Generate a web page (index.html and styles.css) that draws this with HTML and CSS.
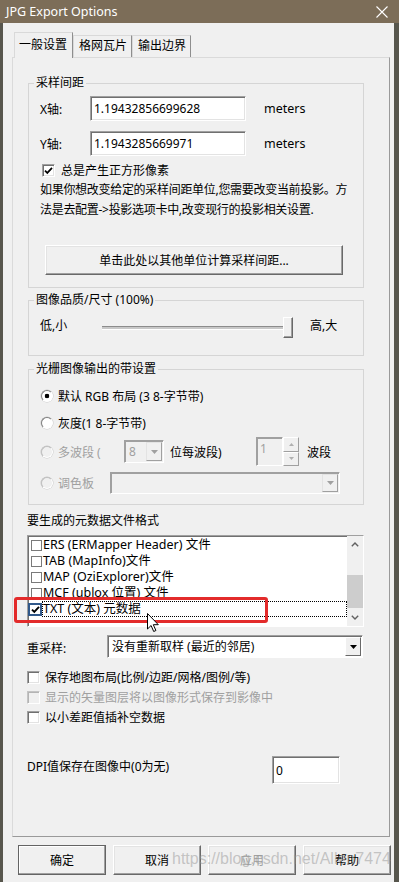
FILE: index.html
```html
<!DOCTYPE html>
<html lang="zh-CN">
<head>
    <meta charset="UTF-8">
    <meta name="viewport" content="width=device-width, initial-scale=1.0">
    <title>JPG Export Options</title>
    <link rel="stylesheet" href="styles.css">
</head>
<body>
    <div class="titlebar">
        <span class="title">JPG Export Options</span>
        <svg class="close" width="12" height="12" viewBox="0 0 12 12"><path d="M0.5 0.5L11.5 11.5M11.5 0.5L0.5 11.5" stroke="#fff" stroke-width="1.1"/></svg>
    </div>

    <div class="window">
        <div class="tabs">
            <div class="tab active">一般设置</div>
            <div class="tab">格网瓦片</div>
            <div class="tab">输出边界</div>
        </div>

        <div class="panel">
            <!-- 采样间距 -->
            <fieldset class="group spacing">
                <legend>采样间距</legend>
                <div class="row axis-row">
                    <span class="axis-label">X轴:</span>
                    <input class="field num" type="text" value="1.19432856699628">
                    <span class="unit">meters</span>
                </div>
                <div class="row axis-row second">
                    <span class="axis-label">Y轴:</span>
                    <input class="field num" type="text" value="1.1943285669971">
                    <span class="unit">meters</span>
                </div>
                <div class="row check-row square">
                    <span class="check"><svg viewBox="0 0 9 9"><path d="M1 4.6l2.3 2.3L8 1.8" stroke="#000" stroke-width="1.7" fill="none"/></svg></span>
                    <span>总是产生正方形像素</span>
                </div>
                <p class="note">如果你想改变给定的采样间距单位,您需要改变当前投影。方<br>法是去配置->投影选项卡中,改变现行的投影相关设置.</p>
                <button class="btn calc">单击此处以其他单位计算采样间距...</button>
            </fieldset>

            <!-- 图像品质 -->
            <fieldset class="group quality">
                <legend>图像品质/尺寸 (100%)</legend>
                <div class="row slider-row">
                    <span class="lo">低,小</span>
                    <div class="slider">
                        <div class="track"></div>
                        <div class="thumb"></div>
                    </div>
                    <span class="hi">高,大</span>
                </div>
            </fieldset>

            <!-- 带设置 -->
            <fieldset class="group bands">
                <legend>光栅图像输出的带设置</legend>
                <div class="row radio-row first">
                    <span class="radio on"></span>
                    <span>默认 RGB 布局 (3 8-字节带)</span>
                </div>
                <div class="row radio-row gray">
                    <span class="radio"></span>
                    <span>灰度(1 8-字节带)</span>
                </div>
                <div class="row radio-row multi">
                    <span class="radio off"></span>
                    <span class="dis multi-label">多波段 (</span>
                    <div class="combo disabled bits">
                        <span class="val">8</span>
                        <span class="drop"><svg width="7" height="4" viewBox="0 0 7 4"><path d="M0 0h7L3.5 4z" fill="#a0a0a0"/></svg></span>
                    </div>
                    <span class="per-band">位每波段)</span>
                    <div class="spin">
                        <span class="spin-val">1</span>
                        <span class="spin-btns">
                            <span class="spin-btn"><svg width="5" height="3" viewBox="0 0 5 3"><path d="M0 3h5L2.5 0z" fill="#b0b0b0"/></svg></span>
                            <span class="spin-btn"><svg width="5" height="3" viewBox="0 0 5 3"><path d="M0 0h5L2.5 3z" fill="#b0b0b0"/></svg></span>
                        </span>
                    </div>
                    <span class="band-word">波段</span>
                </div>
                <div class="row radio-row palette">
                    <span class="radio off"></span>
                    <span class="dis palette-label">调色板</span>
                    <div class="combo disabled pal">
                        <span class="val"></span>
                        <span class="drop"><svg width="7" height="4" viewBox="0 0 7 4"><path d="M0 0h7L3.5 4z" fill="#a0a0a0"/></svg></span>
                    </div>
                </div>
            </fieldset>

            <div class="meta-label">要生成的元数据文件格式</div>
            <div class="listbox">
                <div class="items">
                    <div class="item"><span class="lcheck"></span><span class="itext">ERS (ERMapper Header) 文件</span></div>
                    <div class="item"><span class="lcheck"></span><span class="itext">TAB (MapInfo)文件</span></div>
                    <div class="item"><span class="lcheck"></span><span class="itext">MAP (OziExplorer)文件</span></div>
                    <div class="item"><span class="lcheck"></span><span class="itext">MCF (ublox 位置) 文件</span></div>
                    <div class="item"><span class="lcheck focus"><svg viewBox="0 0 9 9"><path d="M1 4.6l2.3 2.3L8 1.8" stroke="#000" stroke-width="1.9" fill="none"/></svg></span><span class="itext focused">TXT (文本) 元数据</span></div>
                </div>
                <div class="scrollbar">
                    <span class="arrow"><svg width="8" height="5" viewBox="0 0 8 5"><path d="M0.8 4.2L4 1l3.2 3.2" stroke="#606060" stroke-width="1.4" fill="none"/></svg></span>
                    <span class="sb-thumb"></span>
                    <span class="arrow down"><svg width="8" height="5" viewBox="0 0 8 5"><path d="M0.8 0.8L4 4l3.2-3.2" stroke="#606060" stroke-width="1.4" fill="none"/></svg></span>
                </div>
            </div>

            <div class="row resample-row">
                <span class="resample-label">重采样:</span>
                <div class="combo resample">
                    <span class="val">没有重新取样 (最近的邻居)</span>
                    <span class="drop raised"><svg width="7" height="4" viewBox="0 0 7 4"><path d="M0 0h7L3.5 4z" fill="#000"/></svg></span>
                </div>
            </div>

            <div class="options">
                <div class="row opt"><span class="check"></span><span>保存地图布局(比例/边距/网格/图例/等)</span></div>
                <div class="row opt"><span class="check off"></span><span class="dis">显示的矢量图层将以图像形式保存到影像中</span></div>
                <div class="row opt"><span class="check"></span><span>以小差距值插补空数据</span></div>
            </div>

            <div class="row dpi-row">
                <span class="dpi-label">DPI值保存在图像中(0为无)</span>
                <input class="field dpi" type="text" value="0">
            </div>

            <div class="highlight"></div>
            <svg class="cursor" width="12" height="19" viewBox="0 0 12 19"><path d="M0.5 0.5v15.5l3.6-3.5 2.6 6 2.2-1-2.6-5.8h5z" fill="#fff" stroke="#000" stroke-width="1"/></svg>
        </div>

        <div class="buttons">
            <button class="btn default">确定</button>
            <button class="btn">取消</button>
            <button class="btn" disabled>应用</button>
            <button class="btn">帮助</button>
        </div>
    </div>

    <div class="watermark">https://blog.csdn.net/Allen7474</div>
</body>
</html>
```

FILE: styles.css
```css
* {
    box-sizing: border-box;
}
body {
    margin: 0;
    height: 882px;
    overflow: hidden;
    position: relative;
    background-color: #57564d;
    font-family: 'Noto Sans', 'Noto Sans CJK SC', sans-serif;
    font-size: 12px;
    color: #000;
}
.titlebar {
    height: 23px;
    background-color: #7c6d58;
    display: flex;
    align-items: center;
    justify-content: space-between;
    padding: 0 11px 0 6px;
    color: #fff;
}
.title {
    font-size: 12.5px;
}
.window {
    margin-left: 3px;
    width: 391px;
    height: 859px;
    background-color: #f0f0f0;
}
.row {
    display: flex;
    align-items: center;
}
.dis {
    color: #a0a0a0;
}

/* tabs */
.tabs {
    display: flex;
    align-items: flex-end;
    height: 34px;
    padding-left: 11px;
}
.tab {
    width: 59px;
    height: 22px;
    line-height: 20px;
    padding-left: 5px;
    border: 1px solid #d9d9d9;
    border-right-color: #8e8e8e;
    border-bottom: none;
    background-color: #f0f0f0;
}
.tab.active {
    height: 26px;
    line-height: 24px;
    padding-left: 4px;
    margin-bottom: -1px;
    position: relative;
    z-index: 1;
}
.tab + .tab {
    margin-left: 0;
}

/* panel */
.panel {
    position: relative;
    margin-left: 9px;
    width: 378px;
    height: 780px;
    padding-left: 14px;
    border: 1px solid #dadada;
    border-right-color: #9a9a9a;
    border-bottom-color: #9a9a9a;
}
.group {
    margin: 0 0 0 1px;
    padding: 0 11px;
    width: 336px;
    min-width: 0;
    border: 1px solid #d5d5d5;
}
.group legend {
    padding: 0 2px;
    margin-left: -6px;
    line-height: 16px;
}
.spacing {
    margin-top: 17px;
    padding-top: 5px;
    padding-bottom: 12px;
}
.axis-row {
    height: 25px;
}
.axis-row.second {
    margin-top: 10px;
}
.axis-label {
    width: 50px;
}
.field {
    height: 25px;
    padding: 0 3px;
    border: 1px solid;
    border-color: #a0a0a0 #fff #fff #a0a0a0;
    box-shadow: inset 1px 1px 0 #707070, inset -1px -1px 0 #e3e3e3;
    background-color: #fff;
    font-family: inherit;
    font-size: 12px;
    color: #000;
    outline: none;
}
.num {
    width: 156px;
}
.unit {
    margin-left: 18px;
    font-size: 12.5px;
}
.check-row {
    height: 16px;
}
.square {
    margin-top: 6px;
    margin-left: 2px;
}
.check {
    width: 13px;
    height: 13px;
    margin-right: 6px;
    display: flex;
    align-items: center;
    justify-content: center;
    background-color: #fff;
    border: 1px solid;
    border-color: #a0a0a0 #fff #fff #a0a0a0;
    box-shadow: inset 1px 1px 0 #707070, inset -1px -1px 0 #e3e3e3;
}
.check svg {
    width: 9px;
    height: 9px;
}
.check.off {
    background-color: #f0f0f0;
    border-color: #c4c4c4 #fff #fff #c4c4c4;
    box-shadow: inset 1px 1px 0 #b4b4b4;
}
.note {
    margin: 2px 0 0 0;
    line-height: 20px;
    white-space: nowrap;
    letter-spacing: -0.3px;
}
.btn {
    height: 30px;
    background-color: #f0f0f0;
    border: 1px solid;
    border-color: #fff #696969 #696969 #fff;
    box-shadow: inset -1px -1px 0 #a0a0a0, inset 1px 1px 0 #e3e3e3;
    font-family: inherit;
    font-size: 12px;
    color: #000;
    padding: 0;
}
.btn:disabled {
    color: #a0a0a0;
}
.calc {
    display: block;
    width: 298px;
    margin: 25px 0 0 5px;
}

/* quality slider */
.quality {
    margin-top: 4px;
    padding-top: 7px;
    padding-bottom: 20px;
}
.slider-row {
    height: 20px;
}
.lo {
    width: 62px;
}
.slider {
    display: flex;
    align-items: center;
    width: 191px;
}
.track {
    flex: 1;
    height: 4px;
    margin-top: 5px;
    border-top: 1px solid #8c8c8c;
    border-bottom: 1px solid #fff;
    background-color: #c8c8c8;
}
.thumb {
    width: 10px;
    height: 21px;
    margin-left: -7px;
    margin-top: 4px;
    background-color: #f0f0f0;
    border: 1px solid;
    border-color: #fff #696969 #696969 #fff;
    box-shadow: inset -1px -1px 0 #a0a0a0;
}
.hi {
    margin-left: 17px;
}

/* bands */
.bands {
    margin-top: 5px;
    padding-top: 9px;
    padding-bottom: 10px;
}
.radio-row {
    height: 20px;
}
.radio-row.gray {
    margin-top: 7px;
}
.radio-row.multi {
    height: 29px;
    margin-top: 4px;
}
.radio-row.palette {
    height: 22px;
    margin-top: 6px;
}
.radio {
    width: 12px;
    height: 12px;
    margin: 0 5px 0 1px;
    border-radius: 50%;
    border: 1px solid;
    border-color: #808080 #fff #fff #808080;
    background-color: #fff;
    box-shadow: 0 0 0 0.5px #c8c8c8;
}
.radio.on {
    background: radial-gradient(circle, #000 0 2px, #fff 2.6px);
}
.radio.off {
    background-color: #f0f0f0;
    border-color: #c0c0c0 #fff #fff #c0c0c0;
}
.multi-label {
    width: 66px;
}
.combo {
    display: flex;
    height: 23px;
    background-color: #fff;
    border: 1px solid;
    border-color: #a0a0a0 #fff #fff #a0a0a0;
    box-shadow: inset 1px 1px 0 #707070;
    padding: 1px;
}
.combo .val {
    flex: 1;
    padding-left: 3px;
    line-height: 19px;
    white-space: nowrap;
}
.drop {
    width: 16px;
    display: flex;
    align-items: center;
    justify-content: center;
    background-color: #f0f0f0;
    border: 1px solid;
    border-color: #e3e3e3 #a0a0a0 #a0a0a0 #e3e3e3;
}
.drop.raised {
    border-color: #fff #696969 #696969 #fff;
}
.combo.disabled {
    background-color: #f0f0f0;
    color: #a0a0a0;
    box-shadow: inset 1px 1px 0 #a0a0a0;
}
.bits {
    width: 40px;
}
.per-band {
    margin-left: 6px;
    width: 86px;
}
.spin {
    display: flex;
    width: 43px;
    height: 29px;
}
.spin-val {
    width: 27px;
    padding-left: 3px;
    line-height: 22px;
    color: #a0a0a0;
    border: 1px solid;
    border-color: #a0a0a0 #fff #fff #a0a0a0;
    box-shadow: inset 1px 1px 0 #a0a0a0;
}
.spin-btns {
    flex: 1;
    display: flex;
    flex-direction: column;
}
.spin-btn {
    flex: 1;
    display: flex;
    align-items: center;
    justify-content: center;
    border: 1px solid;
    border-color: #fff #a0a0a0 #a0a0a0 #fff;
}
.band-word {
    margin-left: 8px;
}
.palette-label {
    width: 52px;
}
.pal {
    width: 230px;
    height: 22px;
}

/* metadata list */
.meta-label {
    margin-top: 8px;
    line-height: 16px;
}
.listbox {
    display: flex;
    margin-top: 6px;
    width: 337px;
    height: 92px;
    background-color: #fff;
    border: 1px solid;
    border-color: #a0a0a0 #fff #fff #a0a0a0;
    box-shadow: inset 1px 1px 0 #707070;
}
.items {
    flex: 1;
    padding: 1px 0 0 3px;
}
.item {
    display: flex;
    align-items: center;
    height: 16px;
    font-size: 12.5px;
}
.lcheck {
    width: 11px;
    height: 11px;
    margin-right: 1px;
    border: 1px solid #7a7a7a;
    background-color: #fff;
    display: flex;
    align-items: center;
    justify-content: center;
}
.lcheck.focus {
    width: 14px;
    height: 13px;
    margin-left: -3px;
    border: 2px solid #30588a;
}
.lcheck svg {
    width: 9px;
    height: 9px;
}
.itext {
    line-height: 14px;
    white-space: nowrap;
}
.itext.focused {
    flex: 1;
    margin-right: 1px;
    outline: 1px dotted #000;
}
.scrollbar {
    width: 16px;
    display: flex;
    flex-direction: column;
    background-color: #f0f0f0;
}
.arrow {
    height: 18px;
    display: flex;
    align-items: center;
    justify-content: center;
}
.sb-thumb {
    margin-top: 21px;
    height: 34px;
    background-color: #cdcdcd;
}
.arrow.down {
    margin-top: auto;
}

/* resample + options */
.resample-row {
    margin-top: 8px;
}
.resample-label {
    width: 80px;
    padding-top: 2px;
}
.resample {
    width: 256px;
    height: 23px;
}
.options {
    margin-top: 9px;
}
.opt {
    height: 20px;
}
.opt .check {
    margin-right: 5px;
}
.dpi-row {
    margin-top: 29px;
    align-items: flex-start;
}
.dpi-label {
    width: 245px;
    line-height: 22px;
}
.dpi {
    width: 68px;
    height: 28px;
}

/* overlays */
.highlight {
    position: absolute;
    left: 1px;
    top: 539px;
    width: 254px;
    height: 26px;
    border: 3px solid #e32b2b;
    border-radius: 3px;
}
.cursor {
    position: absolute;
    left: 134px;
    top: 555px;
}

/* bottom buttons */
.buttons {
    display: flex;
    gap: 7px;
    margin-top: 8px;
    padding-left: 15px;
}
.buttons .btn {
    width: 88px;
}
.btn.default {
    border-color: #646464;
    box-shadow: inset -1px -1px 0 #a0a0a0, inset 1px 1px 0 #fff;
}
.watermark {
    position: absolute;
    left: 172px;
    top: 850px;
    font-family: 'Liberation Sans', sans-serif;
    font-size: 16px;
    line-height: 18px;
    color: rgba(150, 150, 150, 0.5);
}
```
